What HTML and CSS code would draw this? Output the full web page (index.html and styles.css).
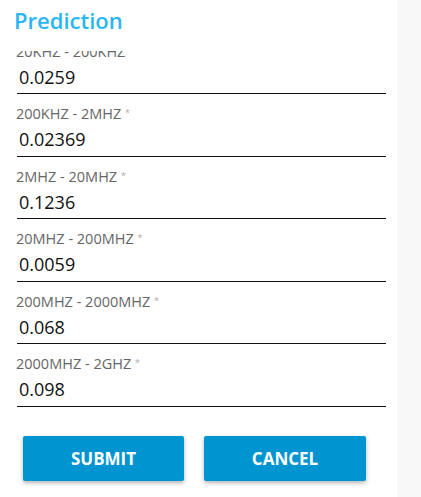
FILE: index.html
```html
<!DOCTYPE html>
<html>
<head>
<meta charset="utf-8">
<link rel="stylesheet" href="styles.css">
</head>
<body>
<div class="page">
  <main class="panel">
    <header class="head"><h1 class="title">Prediction</h1></header>
    <div class="viewport">
      <div class="list">
        <div class="field"><div class="label">20KHZ - 200KHZ <span class="req">*</span></div><div class="value">0.0259</div></div>
        <div class="field"><div class="label">200KHZ - 2MHZ <span class="req">*</span></div><div class="value">0.02369</div></div>
        <div class="field"><div class="label">2MHZ - 20MHZ <span class="req">*</span></div><div class="value">0.1236</div></div>
        <div class="field"><div class="label">20MHZ - 200MHZ <span class="req">*</span></div><div class="value">0.0059</div></div>
        <div class="field"><div class="label">200MHZ - 2000MHZ <span class="req">*</span></div><div class="value">0.068</div></div>
        <div class="field"><div class="label">2000MHZ - 2GHZ <span class="req">*</span></div><div class="value">0.098</div></div>
      </div>
    </div>
    <div class="actions">
      <button class="btn">SUBMIT</button>
      <button class="btn">CANCEL</button>
    </div>
  </main>
  <aside class="side"></aside>
</div>
</body>
</html>
```
FILE: styles.css
```css
html, body { margin: 0; padding: 0; background: #fff; }
body { font-family: "Open Sans", "Noto Sans", sans-serif; }
.page { display: flex; width: 421px; height: 497px; overflow: hidden; }
.panel { width: 397px; background: #fff; display: flex; flex-direction: column; }
.side { flex: 1; background: #f8f8f8; }
.head { height: 51px; padding-left: 14px; box-sizing: border-box; }
.title { margin: 0; padding-top: 4px; font-size: 22px; line-height: 32px; font-weight: 600; color: #29b6f6; }
.viewport { height: 356px; overflow: hidden; }
.list { margin-top: -19.5px; padding-left: 17px; }
.field { width: 369px; height: 62.5px; box-sizing: border-box; border-bottom: 1px solid #111; padding-top: 12px; }
.label { font-size: 14.5px; line-height: 16px; color: #666; margin-left: -1px; }
.req { font-size: 9px; color: #aaa; vertical-align: top; position: relative; top: -1px; }
.value { font-size: 18px; line-height: 30px; color: #111; padding-left: 2px; margin-top: 2px; }
.actions { display: flex; gap: 20px; padding: 29px 0 0 23px; }
.btn { width: 161px; height: 45px; border: none; border-radius: 2px; background: #0095d0; color: #fff; font-family: "Open Sans", sans-serif; font-weight: 700; font-size: 17px; box-shadow: 0 2px 4px rgba(0,0,0,0.3); padding: 0; }
.btn + .btn { width: 162px; }
```
